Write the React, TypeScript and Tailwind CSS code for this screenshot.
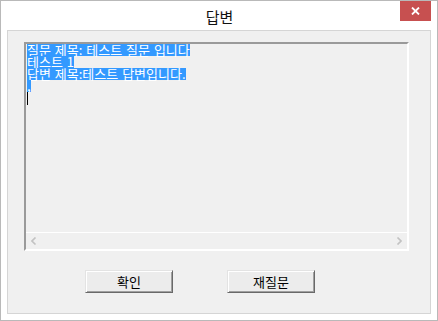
import React from "react";

const KR = { fontFamily: '"Noto Sans CJK KR", "Noto Sans", sans-serif' };

function Sel({ children }: { children: React.ReactNode }) {
  return (
    <div className="h-[12px] leading-[12px] flex">
      <span className="inline-block h-[12px] leading-[12px] bg-[#3399ff] text-white whitespace-pre">
        {children}
      </span>
    </div>
  );
}

function Btn({ label }: { label: string }) {
  return (
    <button
      className="w-[88px] h-[23px] flex items-center justify-center text-[13px] leading-[13px] text-black bg-[#ececec] border border-t-[#e3e3e3] border-l-[#e3e3e3] border-b-[#696969] border-r-[#696969] shadow-[inset_1px_1px_0_#ffffff,inset_-1px_-1px_0_#a0a0a0]"
      style={KR}
    >
      {label}
    </button>
  );
}

export default function App() {
  return (
    <div
      className="w-[438px] h-[321px] border border-[#b9b9b9] bg-white flex flex-col"
      style={KR}
    >
      <div className="relative h-[29px] shrink-0 flex items-center justify-center">
        <span className="text-[15px] leading-[15px] text-[#111] pl-[1px] pt-[1px]">답변</span>
        <div className="absolute top-0 right-[6px] w-[31px] h-[20px] bg-[#c75050] flex items-center justify-center">
          <svg width="9" height="8" viewBox="0 0 9 8">
            <path d="M1 0.5 L8 7.5 M8 0.5 L1 7.5" stroke="#ffffff" strokeWidth="1.8" />
          </svg>
        </div>
      </div>
      <div className="mx-[6px] h-[284px] shrink-0 border border-[#d5d5d5] bg-[#f0f0f0] flex flex-col pl-[16px] pt-[11px]">
        <div className="w-[385px] h-[209px] flex flex-col border-2 border-t-[#9a9a9a] border-l-[#9a9a9a] border-b-white border-r-white">
          <div className="flex-1 flex flex-col pl-[1px] text-[13px] [word-spacing:1px] overflow-hidden">
            <Sel>질문 제목: 테스트 질문 입니다</Sel>
            <Sel>테스트 1</Sel>
            <Sel>답변 제목:테스트 답변입니다.</Sel>
            <Sel>,</Sel>
            <div className="w-[1px] h-[13px] bg-black" />
          </div>
          <div className="h-[17px] shrink-0 border-t border-white flex items-center justify-between px-[5px] text-[#c2c2c2]">
            <svg width="6" height="8" viewBox="0 0 6 8">
              <path d="M4.5 0.5 L1 4 L4.5 7.5" stroke="#c2c2c2" strokeWidth="1.6" fill="none" />
            </svg>
            <svg width="6" height="8" viewBox="0 0 6 8">
              <path d="M1.5 0.5 L5 4 L1.5 7.5" stroke="#c2c2c2" strokeWidth="1.6" fill="none" />
            </svg>
          </div>
        </div>
        <div className="flex pl-[61px] gap-[54px] mt-[19px]">
          <Btn label="확인" />
          <Btn label="재질문" />
        </div>
      </div>
    </div>
  );
}
